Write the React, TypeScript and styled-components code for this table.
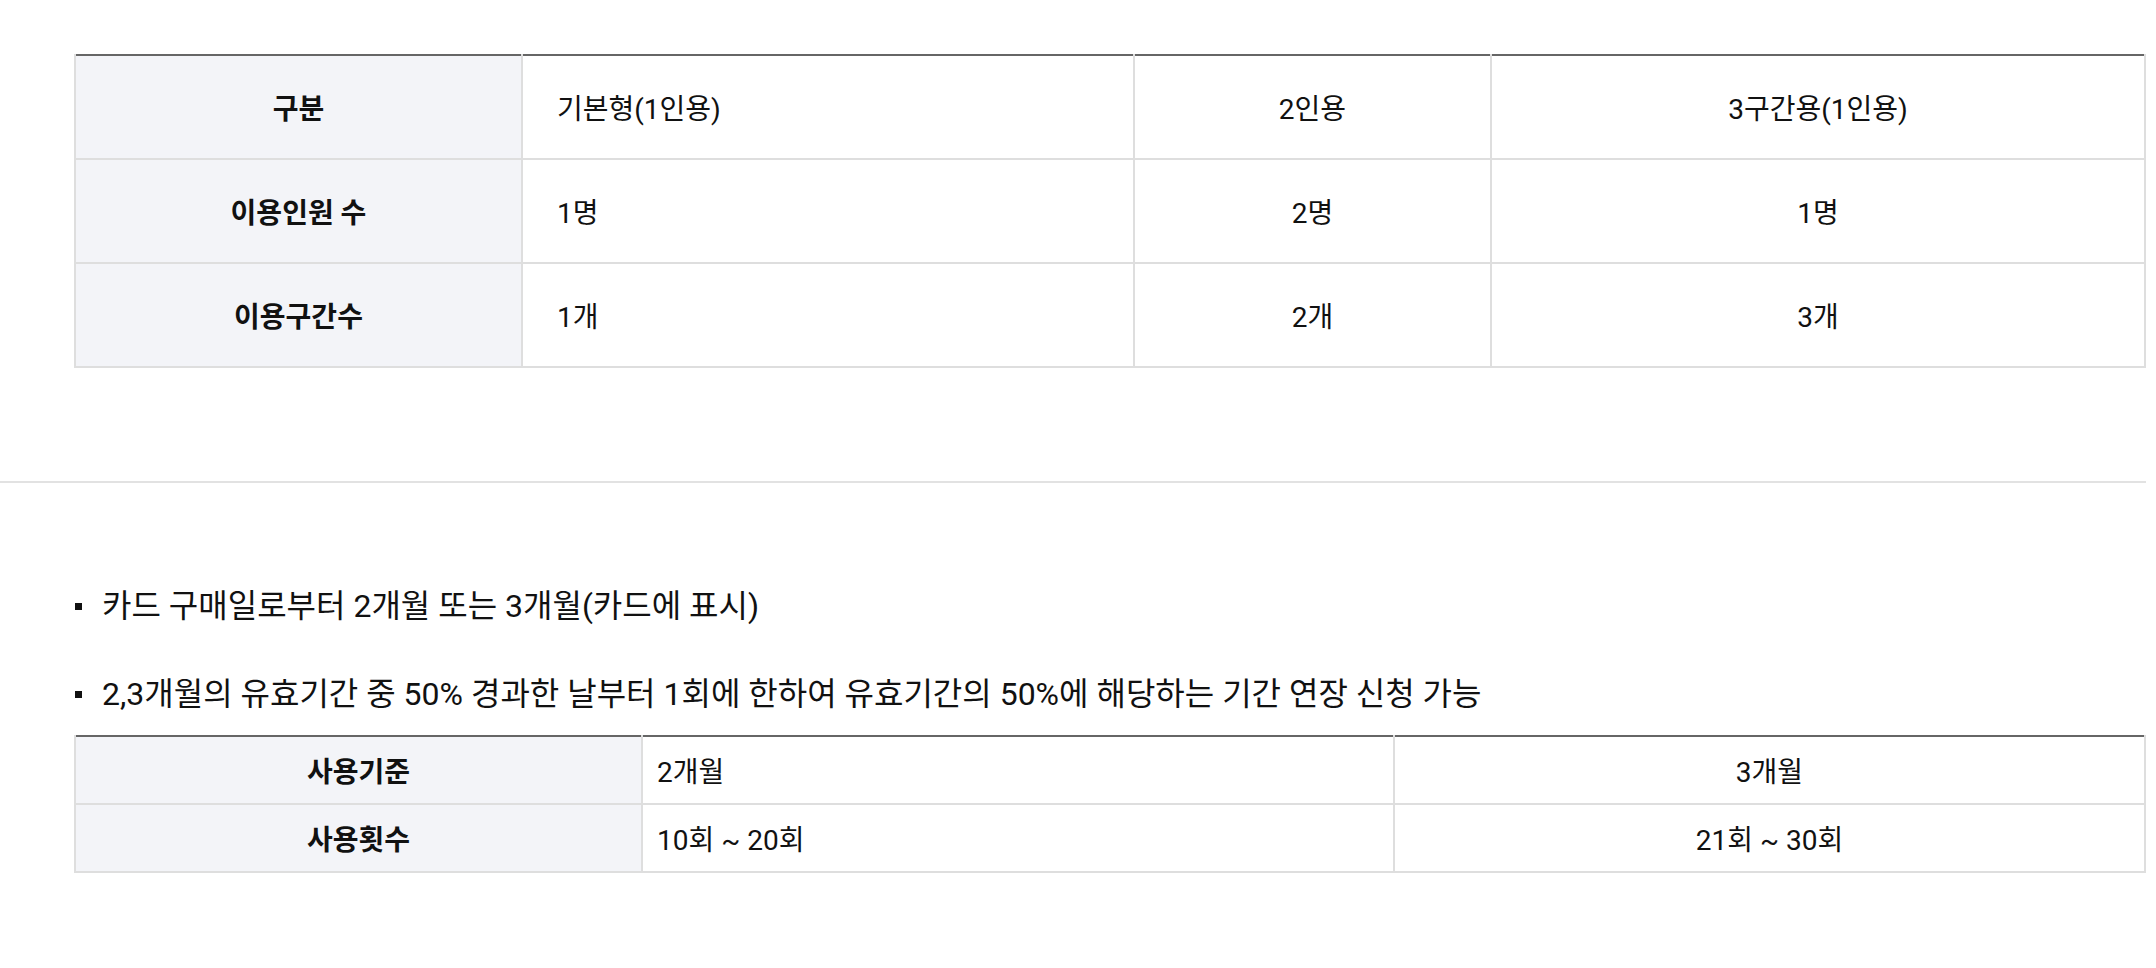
import React from "react";
import styled, { createGlobalStyle } from "styled-components";

const GlobalStyle = createGlobalStyle`
  body {
    margin: 0;
    background: #fff;
    color: #111;
    font-family: Roboto, "Noto Sans CJK KR", sans-serif;
  }
`;

const StyledPage = styled.div`
  width: 2146px;
  padding-top: 54px;
  padding-bottom: 90px;
`;

const StyledSection = styled.div`
  padding-left: 74px;
`;

const StyledTable = styled.table`
  width: 100%;
  border-collapse: collapse;
  table-layout: fixed;
  border-top: 2px solid #666;
  font-size: 28px;
`;

const StyledTh = styled.th<{ $height: number }>`
  height: ${(p) => p.$height}px;
  padding: 0;
  background: #f3f4f8;
  border: 2px solid #dedede;
  border-top: none;
  font-weight: 700;
  text-align: center;
  color: #111;
`;

const StyledTd = styled.td<{ $align?: string; $pad?: number; $height: number }>`
  height: ${(p) => p.$height}px;
  padding: 0 0 0 ${(p) => p.$pad ?? 0}px;
  border: 2px solid #dedede;
  border-top: none;
  text-align: ${(p) => p.$align ?? "center"};
  color: #111;
`;

const StyledDivider = styled.hr`
  margin: 113px 0 0;
  border: none;
  height: 2px;
  background: #e2e2e2;
`;

const StyledList = styled.ul`
  list-style: none;
  margin: 103px 0 21px;
  padding: 0;
  display: flex;
  flex-direction: column;
  gap: 48px;
`;

const StyledItem = styled.li`
  position: relative;
  padding-left: 28px;
  font-size: 32px;
  line-height: 40px;
  color: #111;

  &::before {
    content: "";
    position: absolute;
    left: 1px;
    top: 17px;
    width: 7px;
    height: 7px;
    background: #111;
  }
`;

const passTable = [
  { head: "구분", cells: ["기본형(1인용)", "2인용", "3구간용(1인용)"] },
  { head: "이용인원 수", cells: ["1명", "2명", "1명"] },
  { head: "이용구간수", cells: ["1개", "2개", "3개"] },
];

const usageTable = [
  { head: "사용기준", cells: ["2개월", "3개월"] },
  { head: "사용횟수", cells: ["10회 ~ 20회", "21회 ~ 30회"] },
];

const App = () => {
  return (
    <>
      <GlobalStyle />
      <StyledPage>
        <StyledSection>
          <StyledTable>
            <colgroup>
              <col style={{ width: 447 }} />
              <col style={{ width: 612 }} />
              <col style={{ width: 357 }} />
              <col />
            </colgroup>
            <tbody>
              {passTable.map((row) => (
                <tr key={row.head}>
                  <StyledTh $height={102}>{row.head}</StyledTh>
                  {row.cells.map((cell, i) => (
                    <StyledTd
                      key={i}
                      $height={102}
                      $align={i === 0 ? "left" : "center"}
                      $pad={i === 0 ? 34 : 0}
                    >
                      {cell}
                    </StyledTd>
                  ))}
                </tr>
              ))}
            </tbody>
          </StyledTable>
        </StyledSection>

        <StyledDivider />

        <StyledSection>
          <StyledList>
            <StyledItem>카드 구매일로부터 2개월 또는 3개월(카드에 표시)</StyledItem>
            <StyledItem>
              2,3개월의 유효기간 중 50% 경과한 날부터 1회에 한하여 유효기간의 50%에
              해당하는 기간 연장 신청 가능
            </StyledItem>
          </StyledList>
          <StyledTable>
            <colgroup>
              <col style={{ width: 567 }} />
              <col style={{ width: 752 }} />
              <col />
            </colgroup>
            <tbody>
              {usageTable.map((row) => (
                <tr key={row.head}>
                  <StyledTh $height={66}>{row.head}</StyledTh>
                  {row.cells.map((cell, i) => (
                    <StyledTd
                      key={i}
                      $height={66}
                      $align={i === 0 ? "left" : "center"}
                      $pad={i === 0 ? 14 : 0}
                    >
                      {cell}
                    </StyledTd>
                  ))}
                </tr>
              ))}
            </tbody>
          </StyledTable>
        </StyledSection>
      </StyledPage>
    </>
  );
};

export default App;
